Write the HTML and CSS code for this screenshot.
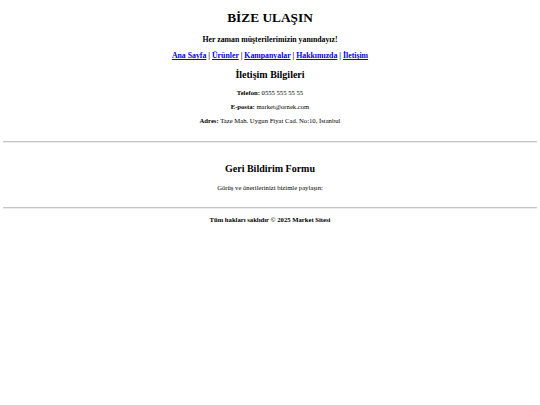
FILE: index.html
```html
<!DOCTYPE html>
<html lang="tr">
<head>
<meta charset="utf-8">
<title>Bize Ulaşın</title>
<link rel="stylesheet" href="styles.css">
</head>
<body>
<header class="header">
  <h1 class="title">BİZE ULAŞIN</h1>
  <p class="tagline">Her zaman müşterilerimizin yanındayız!</p>
  <nav class="nav">
    <a href="#">Ana Sayfa</a> | <a href="#">Ürünler</a> | <a href="#">Kampanyalar</a> | <a href="#">Hakkımızda</a> | <a href="#">İletişim</a>
  </nav>
</header>
<section class="info">
  <h2 class="section-title info-title">İletişim Bilgileri</h2>
  <p class="line"><strong>Telefon:</strong> 0555 555 55 55</p>
  <p class="line"><strong>E-posta:</strong> market@ornek.com</p>
  <p class="line"><strong>Adres:</strong> Taze Mah. Uygun Fiyat Cad. No:10, İstanbul</p>
</section>
<hr class="rule">
<section class="feedback">
  <h2 class="section-title feedback-title">Geri Bildirim Formu</h2>
  <p class="line">Görüş ve önerilerinizi bizimle paylaşın:</p>
</section>
<hr class="rule">
<footer class="footer">
  <p class="copy">Tüm hakları saklıdır © 2025 Market Sitesi</p>
</footer>
</body>
</html>
```
FILE: styles.css
```css
html, body {
  background: #ffffff;
}
body {
  margin: 3.33px;
  font-family: "Liberation Serif", "Times New Roman", serif;
  color: #000;
  text-align: center;
}
.title {
  font-size: 13.33px;
  margin: 6.9px 0 8.4px;
}
.tagline {
  font-size: 7.8px;
  font-weight: bold;
  margin: 7.8px 0;
}
.nav {
  font-size: 7.8px;
  font-weight: bold;
  margin: 7.8px 0;
}
.nav a {
  color: #0000ee;
}
.section-title {
  font-size: 10px;
  margin: 8.3px 0;
}
.info-title {
  margin-bottom: 9.3px;
}
.feedback-title {
  margin-top: 9.3px;
  margin-bottom: 10px;
}
.line {
  font-size: 6.67px;
  margin: 7px 0;
}
.info {
  padding-bottom: 6.6px;
}
.rule {
  margin: 3.33px 0;
  border: none;
  border-top: 1px solid #c6c6c6;
  border-bottom: 1px solid #ececec;
  height: 0;
}
.feedback {
  padding: 7.3px 0 5.8px;
}
.copy {
  font-size: 6.67px;
  font-weight: bold;
  margin: 6.67px 0;
}
```
